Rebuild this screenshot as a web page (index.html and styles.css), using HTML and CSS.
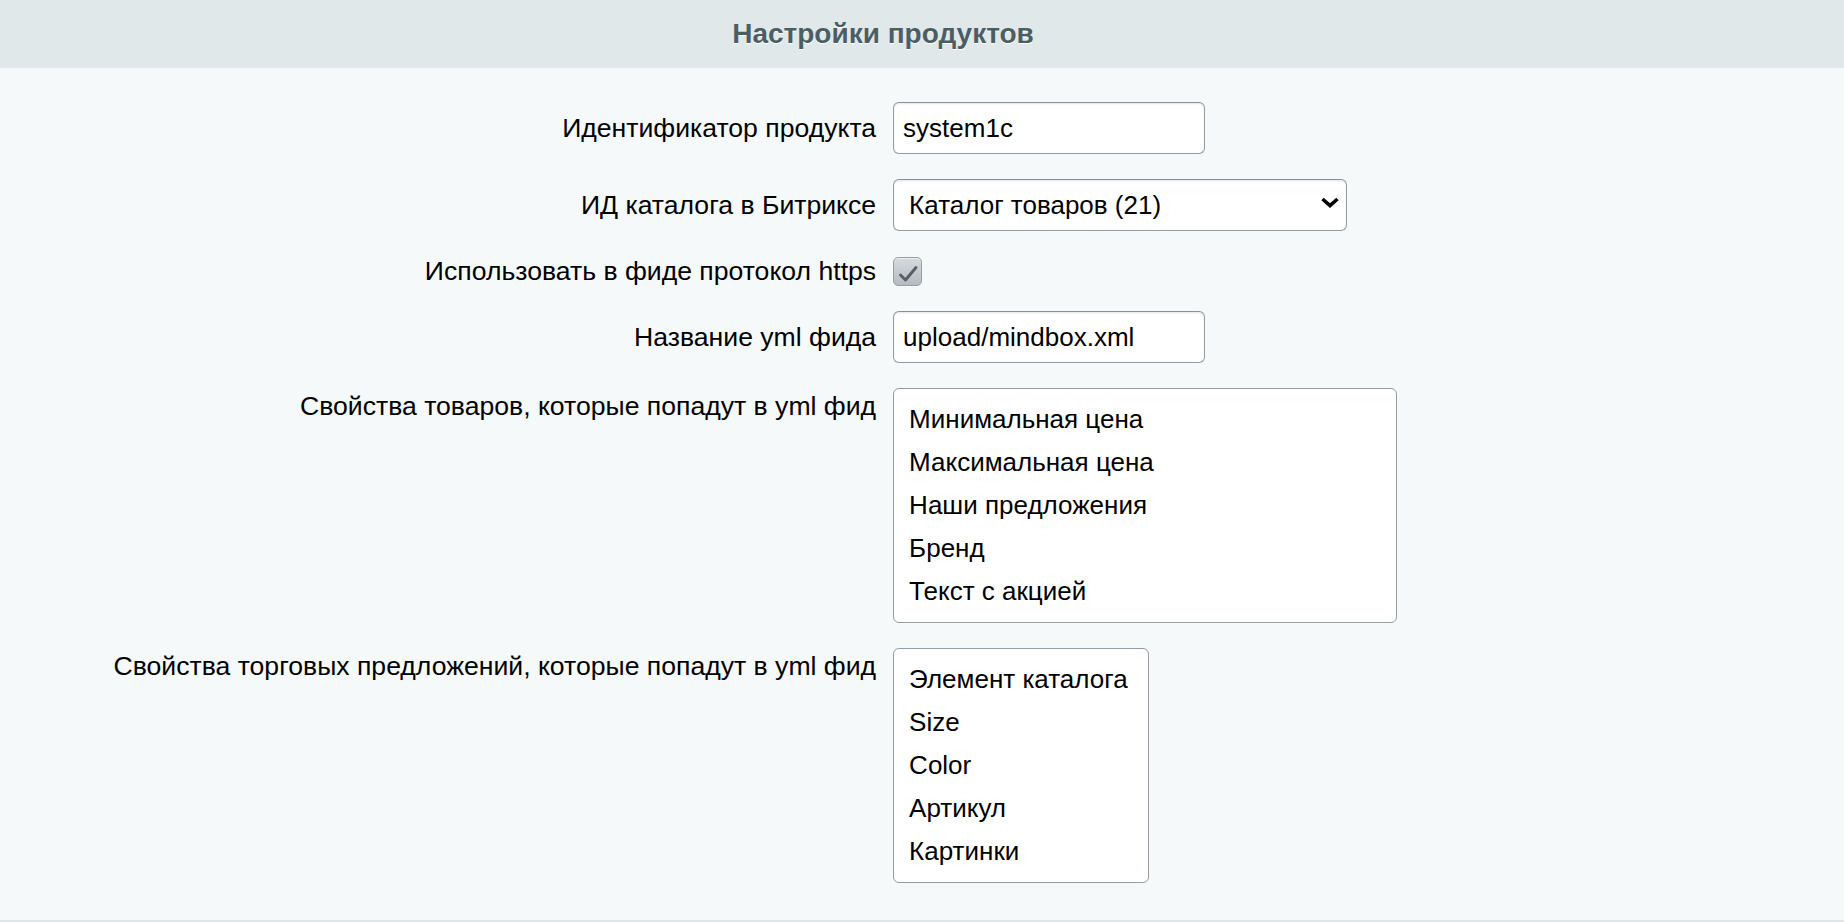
FILE: index.html
```html
<!DOCTYPE html>
<html lang="ru">
<head>
<meta charset="utf-8">
<title>Настройки продуктов</title>
<link rel="stylesheet" href="styles.css">
</head>
<body>
<div class="page">
  <div class="heading"><span class="heading-title">Настройки продуктов</span></div>
  <div class="form">
    <label class="label">Идентификатор продукта</label>
    <div class="ctl"><input class="text" type="text" value="system1c"></div>

    <label class="label">ИД каталога в Битриксе</label>
    <div class="ctl">
      <div class="select-wrap">
        <select class="select"><option>Каталог товаров (21)</option></select>
        <svg class="chevron" width="20" height="11" viewBox="0 0 20 11"><path d="M2.5 2 L10 8.5 L17.5 2" fill="none" stroke="#000" stroke-width="3.6" stroke-linejoin="miter"/></svg>
      </div>
    </div>

    <label class="label">Использовать в фиде протокол https</label>
    <div class="ctl">
      <span class="checkbox"><svg width="29" height="29" viewBox="0 0 29 29"><path d="M7.5 18 L12.5 23 L23 10.5" fill="none" stroke="#575e64" stroke-width="2.9" stroke-linecap="round" stroke-linejoin="round"/></svg></span>
    </div>

    <label class="label">Название yml фида</label>
    <div class="ctl"><input class="text" type="text" value="upload/mindbox.xml"></div>

    <label class="label label-top">Свойства товаров, которые попадут в yml фид</label>
    <div class="ctl ctl-top">
      <div class="listbox listbox-wide">
        <div class="opt">Минимальная цена</div>
        <div class="opt">Максимальная цена</div>
        <div class="opt">Наши предложения</div>
        <div class="opt">Бренд</div>
        <div class="opt">Текст с акцией</div>
      </div>
    </div>

    <label class="label label-top">Свойства торговых предложений, которые попадут в yml фид</label>
    <div class="ctl ctl-top">
      <div class="listbox listbox-narrow">
        <div class="opt">Элемент каталога</div>
        <div class="opt">Size</div>
        <div class="opt">Color</div>
        <div class="opt">Артикул</div>
        <div class="opt">Картинки</div>
      </div>
    </div>
  </div>
</div>
</body>
</html>
```
FILE: styles.css
```css
html, body {
  margin: 0;
  padding: 0;
}
body {
  background: #f5f9f9;
  font-family: "Liberation Sans", Arial, sans-serif;
  color: #000;
}
.page {
  width: 100%;
}
.heading {
  height: 68px;
  background: #e0e8ea;
  display: flex;
  align-items: center;
  justify-content: center;
  padding-right: 78px;
}
.heading-title {
  font-size: 28px;
  font-weight: bold;
  color: #4b5e64;
  text-shadow: 0 1px 0 #fff;
  line-height: 32px;
}
.form {
  display: grid;
  grid-template-columns: 48% 52%;
  row-gap: 25px;
  align-items: center;
  padding: 34px 0 37px;
  border-bottom: 2px solid #dfe6e8;
}
.label {
  text-align: right;
  padding-right: 9px;
  font-size: 26.6px;
  line-height: 30px;
  white-space: nowrap;
}
.label-top {
  align-self: start;
  padding-top: 3px;
}
.ctl {
  padding-left: 8px;
  display: flex;
  align-items: center;
}
.ctl-top {
  align-self: start;
}
.text {
  box-sizing: border-box;
  width: 312px;
  height: 52px;
  margin: 0;
  padding: 0 9px;
  border: 1px solid #939ca2;
  border-top-color: #879198;
  border-radius: 6px;
  background: #fff;
  box-shadow: inset 0 1px 2px rgba(120, 130, 135, 0.2);
  font-family: "Liberation Sans", Arial, sans-serif;
  font-size: 26px;
  color: #000;
  outline: none;
}
.select-wrap {
  position: relative;
  width: 454px;
  height: 52px;
}
.select {
  box-sizing: border-box;
  width: 454px;
  height: 52px;
  margin: 0;
  padding: 0 44px 0 15px;
  border: 1px solid #939ca2;
  border-top-color: #879198;
  border-radius: 6px;
  background: #fff;
  box-shadow: inset 0 1px 2px rgba(120, 130, 135, 0.2);
  font-family: "Liberation Sans", Arial, sans-serif;
  font-size: 26px;
  color: #000;
  -webkit-appearance: none;
  appearance: none;
  outline: none;
}
.chevron {
  position: absolute;
  right: 7px;
  top: 18px;
  pointer-events: none;
}
.checkbox {
  box-sizing: border-box;
  width: 29px;
  height: 29px;
  border: 1px solid #979ea4;
  border-radius: 5px;
  background: linear-gradient(#d6dadd, #b5bbc0);
  box-shadow: inset 0 1px 0 rgba(255, 255, 255, 0.55);
  display: flex;
  align-items: center;
  justify-content: center;
  overflow: hidden;
}
.checkbox svg {
  display: block;
  flex: none;
}
.listbox {
  box-sizing: border-box;
  height: 235px;
  border: 1px solid #939ca2;
  border-radius: 6px;
  background: #fff;
  padding: 9px 0 9px 15px;
}
.listbox-wide {
  width: 504px;
}
.listbox-narrow {
  width: 256px;
}
.opt {
  font-size: 26px;
  line-height: 43px;
  white-space: nowrap;
}
```
